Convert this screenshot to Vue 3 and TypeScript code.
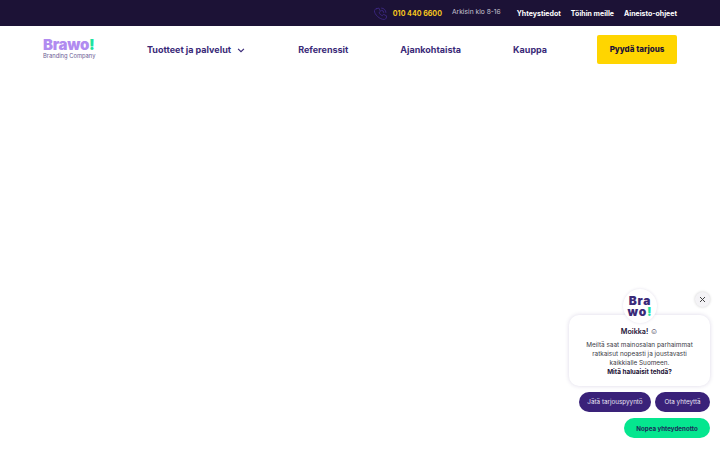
<script setup lang="ts">
const topLinks: string[] = ['Yhteystiedot', 'Töihin meille', 'Aineisto-ohjeet']
</script>

<template>
  <div class="page">
    <div class="topbar">
      <svg class="phone" width="13" height="13" viewBox="0 0 24 24" fill="none" stroke="#3f2a86" stroke-width="1.6" stroke-linecap="round" stroke-linejoin="round">
        <path d="M5 3l4-1 3 6-2.500 2c1 3 3 5 6 6l2-2.500 6 3-1 4c-.5 1.500-2 2.500-3.500 2.500C10 23 1 14 .5 6.500 .5 5 3.500 3.500 5 3z" />
        <path d="M14 2a8 8 0 0 1 8 8M14 6a4 4 0 0 1 4 4" />
      </svg>
      <span class="tel">010 440 6600</span>
      <span class="hours">Arkisin klo 8-16</span>
      <nav class="toplinks">
        <a v-for="l in topLinks" :key="l">{{ l }}</a>
      </nav>
    </div>

    <header class="header">
      <div class="logo">
        <div class="logo-main">Brawo<span>!</span></div>
        <div class="logo-sub">Branding Company</div>
      </div>
      <nav class="nav">
        <a class="nav-first">Tuotteet ja palvelut
          <svg width="8" height="5" viewBox="0 0 9 6" fill="none" stroke="#3a2a78" stroke-width="1.400"><path d="M1 1l3.500 3.500L8 1" /></svg>
        </a>
        <a>Referenssit</a>
        <a>Ajankohtaista</a>
        <a>Kauppa</a>
      </nav>
      <button class="cta">Pyydä tarjous</button>
    </header>

    <main class="spacer"></main>

    <aside class="chat">
      <div class="chat-top">
        <div class="avatar">
          <div>Bra</div>
          <div>wo<span>!</span></div>
        </div>
        <button class="close" aria-label="Sulje">
          <svg width="7" height="7" viewBox="0 0 7 7" stroke="#444" stroke-width="1"><path d="M1 1l5 5M6 1l-5 5" /></svg>
        </button>
      </div>
      <div class="bubble">
        <div class="hello">Moikka! <span class="wave">☺</span></div>
        <p>Meiltä saat mainosalan parhaimmat<br />ratkaisut nopeasti ja joustavasti<br />kaikkialle Suomeen.</p>
        <p class="q">Mitä haluaisit tehdä?</p>
      </div>
      <div class="row">
        <button class="pill first">Jätä tarjouspyyntö</button>
        <button class="pill second">Ota yhteyttä</button>
      </div>
      <div class="row">
        <button class="pill green">Nopea yhteydenotto</button>
      </div>
    </aside>
  </div>
</template>

<style scoped>
.page {
  width: 720px;
  height: 450px;
  position: relative;
  overflow: hidden;
  background: #fff;
  font-family: Inter, "Noto Sans", sans-serif;
  display: flex;
  flex-direction: column;
}
.topbar {
  height: 26px;
  background: #1c1236;
  display: flex;
  align-items: center;
  justify-content: flex-end;
  padding-right: 43px;
  font-size: 7px;
  color: #fff;
  flex: none;
}
.phone { margin-right: 6px; }
.tel { color: #f6c61c; font-weight: 700; font-size: 7.1px; margin-right: 10px; }
.hours { color: #c9c5d3; font-size: 6.7px; margin-right: 16px; margin-top: -2px; }
.toplinks { display: flex; gap: 10px; font-weight: 700; }
.header {
  height: 46px;
  display: flex;
  align-items: center;
  padding: 0 43px;
  flex: none;
}
.logo { width: 104px; flex: none; color: #b18bf0; margin-top: -1px; }
.logo-main { font-size: 15px; line-height: 14px; font-weight: 900; letter-spacing: -0.3px; }
.logo-main span { color: #1ee3a0; }
.logo-sub { font-size: 5.8px; line-height: 7px; color: #6a5c94; }
.nav {
  display: flex;
  flex: 1;
  gap: 52px;
  font-size: 9px;
  font-weight: 700;
  color: #3a2a78;
}
.nav-first { margin-right: 1px; }
.nav-first svg { margin-left: 4px; }
.cta {
  width: 80px;
  height: 29px;
  border: 0;
  border-radius: 2px;
  background: #ffd500;
  color: #1c1236;
  font: 800 8px Inter, sans-serif;
  flex: none;
}
.spacer { flex: 1; }
.chat {
  position: absolute;
  right: 10px;
  bottom: 12px;
  width: 141px;
  display: flex;
  flex-direction: column;
  gap: 6px;
}
.chat-top {
  height: 23px;
  position: relative;
  margin-bottom: -1px;
}
.avatar {
  position: absolute;
  left: 54px;
  top: 2px;
  width: 34px;
  height: 34px;
  border-radius: 50%;
  background: #fff;
  box-shadow: 0 0 3px rgba(60, 40, 120, .15);
  font-size: 12px;
  line-height: 11px;
  letter-spacing: .8px;
  font-weight: 900;
  color: #3a2a78;
  text-align: center;
  padding-top: 6px;
  box-sizing: border-box;
  z-index: 2;
}
.avatar span { color: #1ee3a0; }
.close {
  position: absolute;
  right: 0;
  top: 5px;
  width: 15px;
  height: 15px;
  border-radius: 50%;
  border: 0;
  padding: 0;
  background: #f4f3f6;
  box-shadow: 0 0 3px rgba(0, 0, 0, .2);
  display: flex;
  align-items: center;
  justify-content: center;
}
.bubble {
  height: 71px;
  box-sizing: border-box;
  background: #fff;
  border-radius: 10px;
  box-shadow: 0 0 4px rgba(60, 40, 120, .18);
  text-align: center;
  padding-top: 11px;
  font-size: 6.4px;
  line-height: 9px;
  color: #3b3b45;
}
.hello { font-size: 7.200px; font-weight: 600; color: #1c1236; margin-bottom: 4px; line-height: 10px; }
.wave { font-size: 8px; }
.bubble p { margin: 0; }
.bubble .q { font-weight: 700; color: #1c1236; }
.row { display: flex; justify-content: flex-end; gap: 4px; }
.pill {
  height: 20px;
  padding: 0;
  border: 0;
  border-radius: 10px;
  background: #3a2279;
  color: #e6e2f2;
  font: 400 6.300px Inter, sans-serif;
  white-space: nowrap;
}
.pill.first { width: 72px; }
.pill.second { width: 55px; }
.pill.green {
  width: 86px;
  background: #05e68f;
  color: #1c2a5a;
  font-weight: 700;
  font-size: 6.2px;
}
</style>
